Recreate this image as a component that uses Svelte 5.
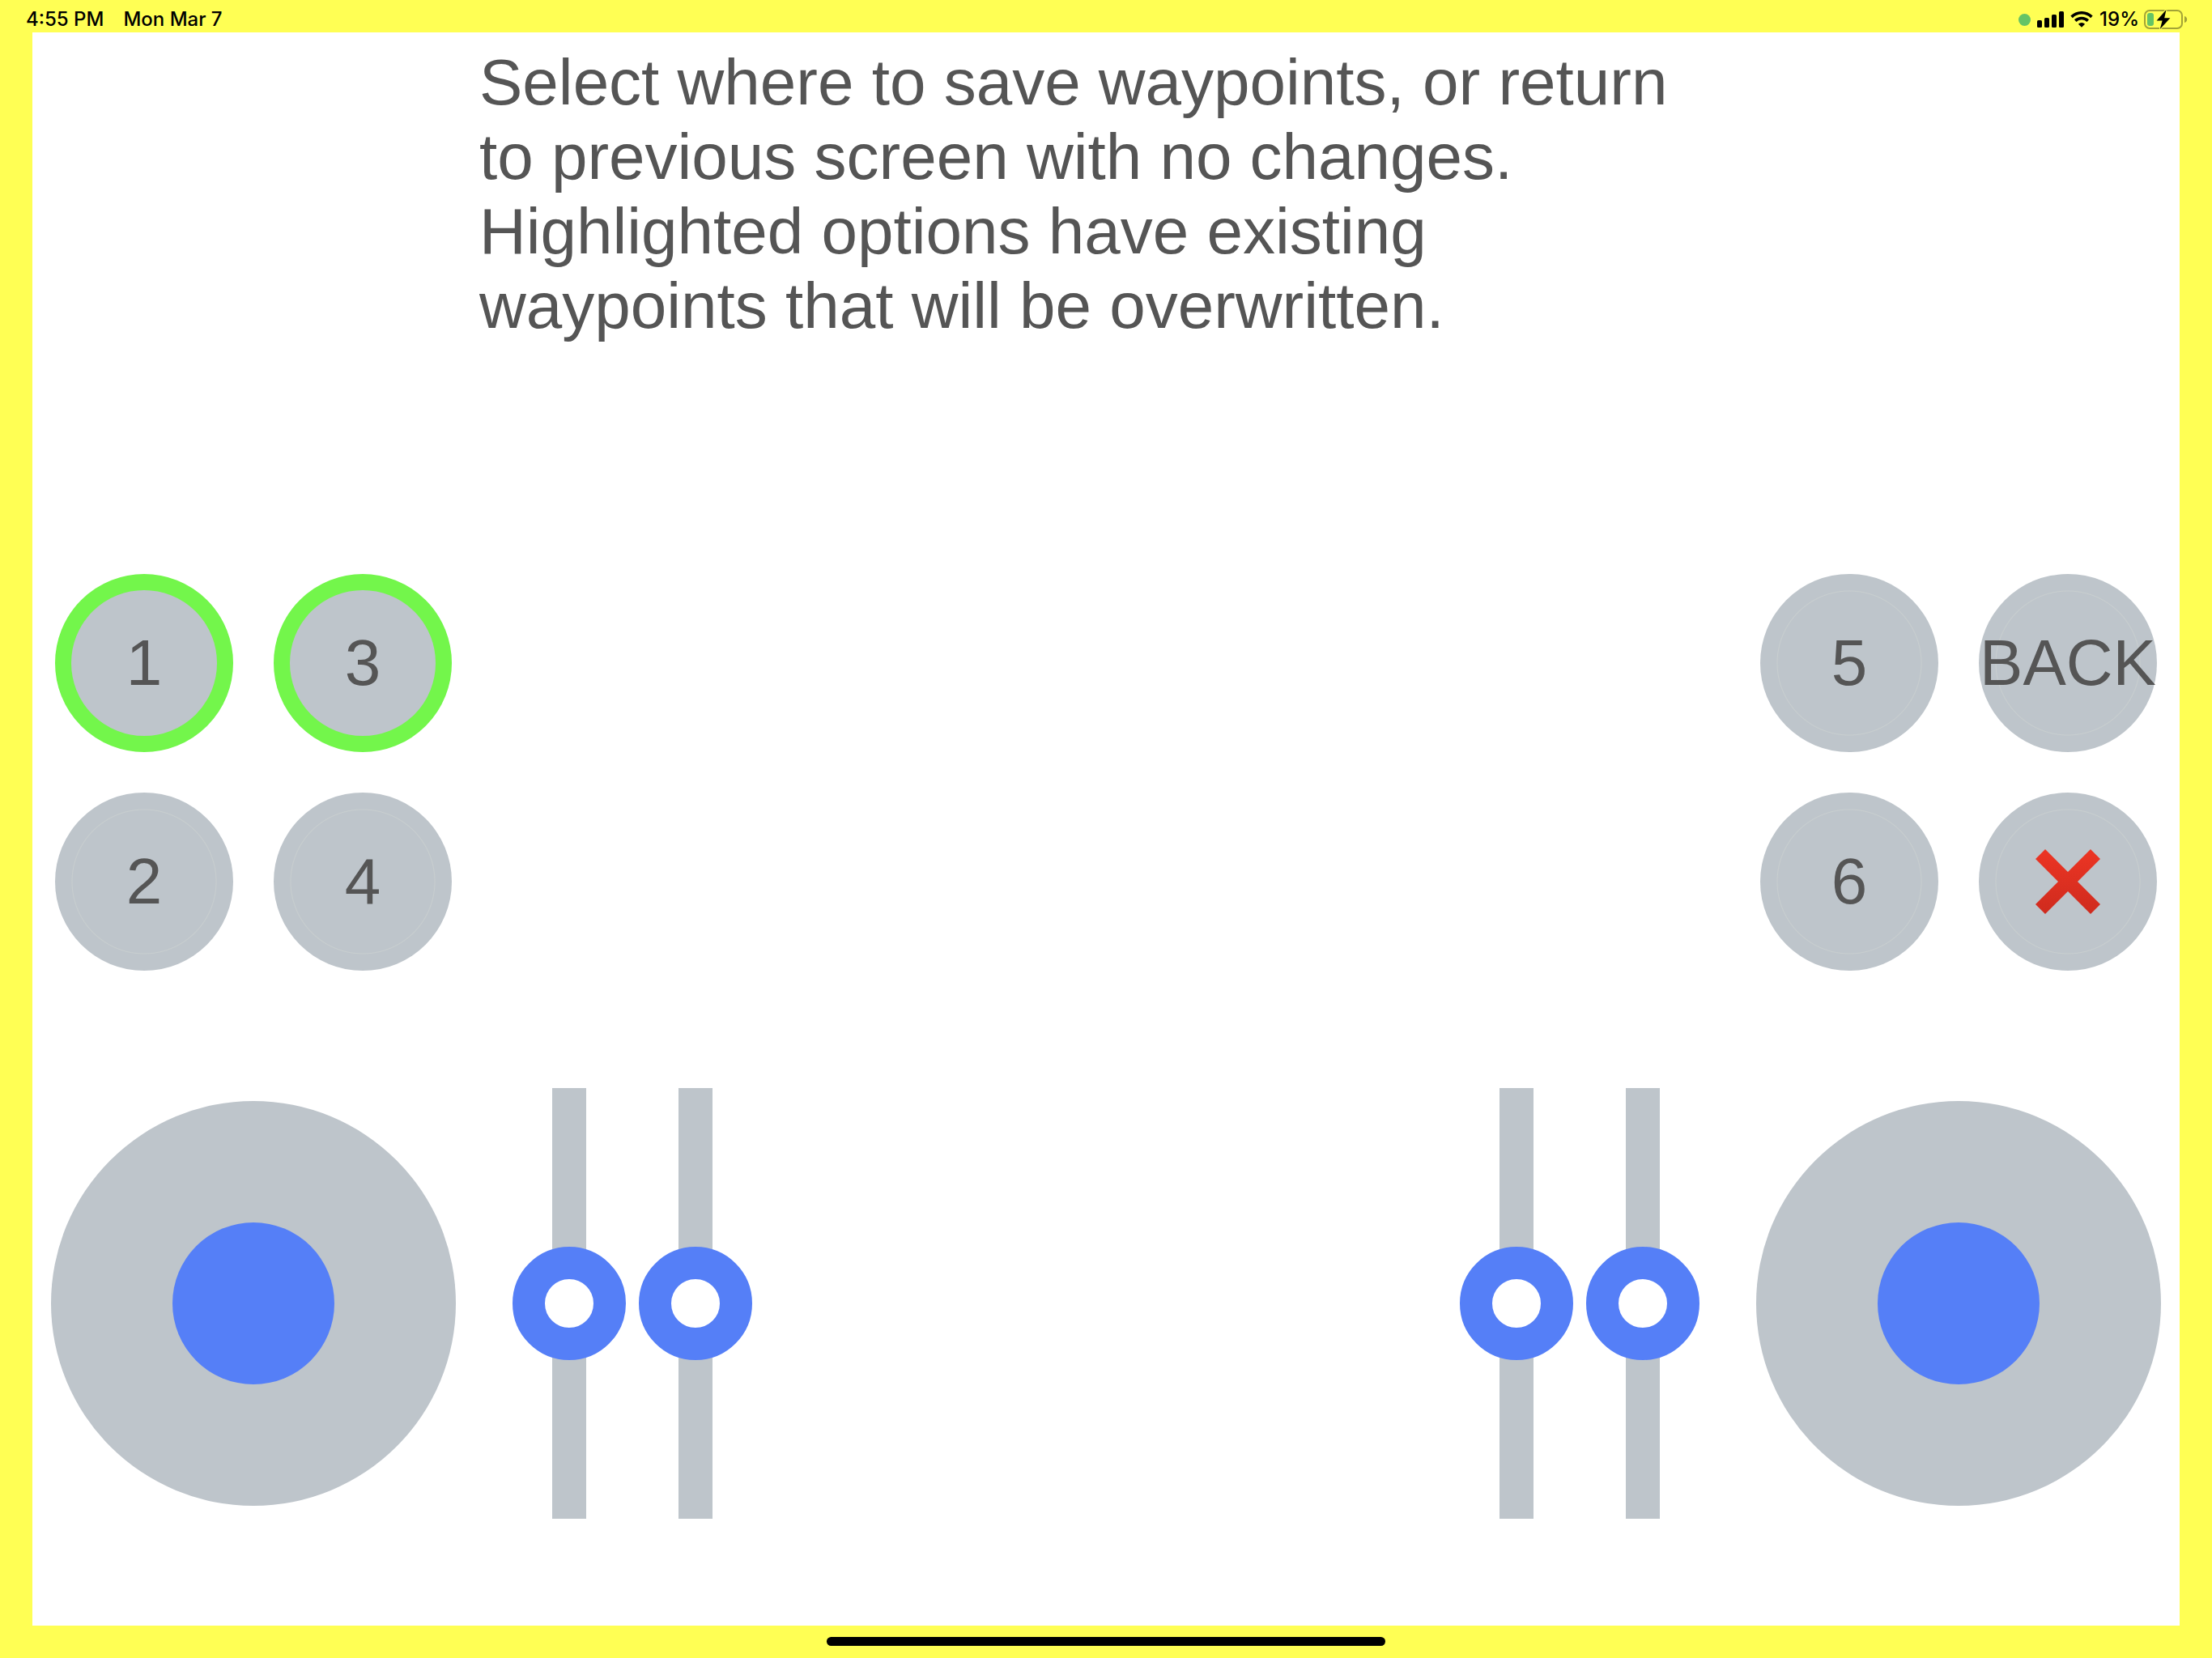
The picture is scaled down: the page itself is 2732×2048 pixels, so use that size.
<script>
  const leftSlots = [
    { label: '1', used: true },
    { label: '2', used: false },
    { label: '3', used: true },
    { label: '4', used: false }
  ];
  const rightSlots = ['5', '6', 'BACK'];

  let sliders = $state([
    { name: 'Left outer slider', side: 'l1', value: 50 },
    { name: 'Left inner slider', side: 'l2', value: 50 },
    { name: 'Right inner slider', side: 'r1', value: 50 },
    { name: 'Right outer slider', side: 'r2', value: 50 }
  ]);
</script>

<div class="page">
  <header class="status">
    <div class="when">
      <span>4:55 PM</span>
      <span>Mon Mar 7</span>
    </div>
    <div class="indicators">
      <span class="dot"></span>
      <svg class="signal" viewBox="0 0 34 20" aria-hidden="true">
        <rect x="0" y="11" width="6" height="9" rx="1.5" />
        <rect x="9" y="8" width="6" height="12" rx="1.5" />
        <rect x="18" y="4" width="6" height="16" rx="1.5" />
        <rect x="27" y="0" width="6" height="20" rx="1.5" />
      </svg>
      <svg class="wifi" viewBox="0 0 28 20" aria-hidden="true">
        <path d="M1.6 6.9a17.6 17.6 0 0 1 24.8 0" />
        <path d="M6.2 11.6a11.2 11.2 0 0 1 15.6 0" />
        <path class="solid" d="M14 19.8l-4.1-4.1a5.9 5.9 0 0 1 8.2 0z" />
      </svg>
      <span class="percent">19%</span>
      <svg class="battery" viewBox="0 0 54 24" aria-hidden="true">
        <rect class="shell" x="1" y="1" width="46" height="22" rx="6" />
        <path class="nub" d="M50 8c2 .6 3.2 2.1 3.2 4s-1.200 3.400-3.200 4z" />
        <rect class="charge" x="4" y="4" width="8" height="16" rx="3" />
        <path class="bolt" d="M27.500 0 15.600 13.400h7L19.800 24 32.400 10.200h-7.200z" />
      </svg>
    </div>
  </header>

  <main class="panel">
    <p class="message">
      Select where to save waypoints, or return to previous screen with no changes. Highlighted options have existing
      waypoints that will be overwritten.
    </p>

    <div class="pads">
      <div class="pad">
        {#each leftSlots as slot}
          <button class="round" class:used={slot.used} type="button">{slot.label}</button>
        {/each}
      </div>
      <div class="pad right">
        {#each rightSlots as label}
          <button class="round" type="button">{label}</button>
        {/each}
        <button class="round" type="button" aria-label="Cancel">
          <svg class="cross" viewBox="0 0 80 80" aria-hidden="true">
            <defs>
              <linearGradient id="cross-red" x1="0" y1="0" x2="0" y2="1">
                <stop offset="0" stop-color="#ec3524" />
                <stop offset="1" stop-color="#cf2b1e" />
              </linearGradient>
            </defs>
            <polygon
              fill="url(#cross-red)"
              points="12,0 40,28 68,0 80,12 52,40 80,68 68,80 40,52 12,80 0,68 28,40 0,12"
            />
          </svg>
        </button>
      </div>
    </div>

    <div class="controls">
      <button class="stick left" type="button" aria-label="Left joystick"><span class="knob"></span></button>
      {#each sliders as slider}
        <input
          class="slider {slider.side}"
          type="range"
          min="0"
          max="100"
          aria-label={slider.name}
          bind:value={slider.value}
        />
      {/each}
      <button class="stick far" type="button" aria-label="Right joystick"><span class="knob"></span></button>
    </div>
  </main>

  <footer class="home"><span class="bar"></span></footer>
</div>

<style>
  :global(body) {
    background: #ffff54;
  }

  .page {
    --grey: #bec5cb;
    --blue: #557ff7;
    box-sizing: border-box;
    display: flex;
    flex-direction: column;
    min-height: 100vh;
    background: #ffff54;
    color: #555;
    font-family: 'Liberation Sans', Arial, sans-serif;
  }

  .status {
    display: flex;
    justify-content: space-between;
    box-sizing: border-box;
    height: 40px;
    padding: 8px 30px 0 32px;
    color: #000;
    font: 500 24px/32px Inter, sans-serif;
  }

  .when {
    display: flex;
    gap: 24px;
  }

  .indicators {
    display: flex;
    align-items: center;
    height: 32px;
  }

  .dot {
    width: 15px;
    height: 15px;
    margin-right: 8px;
    border-radius: 50%;
    background: #65c466;
  }

  .signal {
    width: 34px;
    height: 20px;
    margin-right: 7px;
  }

  .wifi {
    width: 28px;
    height: 20px;
    margin-right: 8px;
    fill: none;
    stroke: #000;
    stroke-width: 3.6;
  }

  .wifi .solid {
    fill: #000;
    stroke: none;
  }

  .percent {
    margin-right: 6px;
  }

  .battery {
    width: 54px;
    height: 24px;
    overflow: visible;
  }

  .shell {
    fill: none;
    stroke: #a3a336;
    stroke-width: 2;
  }

  .nub {
    fill: #a3a336;
  }

  .charge {
    fill: #65c466;
  }

  .bolt {
    stroke: #ffff54;
    stroke-width: 2;
    paint-order: stroke;
  }

  .panel {
    flex: 1;
    display: grid;
    grid-template-rows: 161fr 135fr 196fr;
    margin: 0 40px;
    background: #fff;
  }

  .message {
    margin: 0;
    padding: 16px calc(100% * 14 / 68 + 48px) 0 calc(100% * 14 / 68 + 6px);
    font-size: 80px;
    line-height: 92px;
  }

  .pads {
    display: grid;
    grid-template-columns: 14fr 40fr 14fr;
    align-items: center;
  }

  .pad {
    display: grid;
    grid-auto-flow: column;
    grid-template-rows: auto auto;
    justify-content: center;
    gap: 50px;
  }

  .pad.right {
    grid-column: 3;
  }

  .round {
    display: flex;
    align-items: center;
    justify-content: center;
    width: 220px;
    height: 220px;
    padding: 0;
    border: 0;
    border-radius: 50%;
    background: radial-gradient(circle, var(--grey) 88px, #c8cecf 89px, var(--grey) 90px);
    color: inherit;
    font: inherit;
    font-size: 80px;
    line-height: 92px;
    white-space: nowrap;
  }

  .round.used {
    border: 20px solid #73f64b;
    background: var(--grey);
  }

  .cross {
    width: 80px;
    height: 80px;
  }

  .controls {
    display: grid;
    grid-template-columns:
      minmax(0, 14fr) 1fr minmax(0, 4fr) minmax(0, 4fr) 22fr minmax(0, 4fr) minmax(0, 4fr)
      1fr minmax(0, 14fr);
    align-content: start;
    align-items: center;
    justify-items: center;
    padding-top: 120px;
  }

  .stick {
    grid-row: 1;
    display: grid;
    place-items: center;
    width: 500px;
    height: 500px;
    padding: 0;
    border: 0;
    border-radius: 50%;
    background: var(--grey);
  }

  .left {
    grid-column: 1;
  }

  .far {
    grid-column: 9;
  }

  .knob {
    width: 200px;
    height: 200px;
    border-radius: 50%;
    background: var(--blue);
  }

  .slider {
    grid-row: 1;
    appearance: none;
    writing-mode: vertical-lr;
    direction: rtl;
    width: 140px;
    height: 532px;
    margin: 0;
    background: linear-gradient(var(--grey), var(--grey)) center / 42px 100% no-repeat;
  }

  .slider::-webkit-slider-thumb {
    appearance: none;
    box-sizing: border-box;
    width: 140px;
    height: 140px;
    border: 40px solid var(--blue);
    border-radius: 50%;
    background: #fff;
  }

  .l1 {
    grid-column: 3;
  }

  .l2 {
    grid-column: 4;
  }

  .r1 {
    grid-column: 6;
  }

  .r2 {
    grid-column: 7;
  }

  .home {
    display: flex;
    justify-content: center;
    box-sizing: border-box;
    height: 40px;
    padding-top: 14px;
  }

  .bar {
    width: 690px;
    height: 11px;
    border-radius: 6px;
    background: #000;
  }
</style>
